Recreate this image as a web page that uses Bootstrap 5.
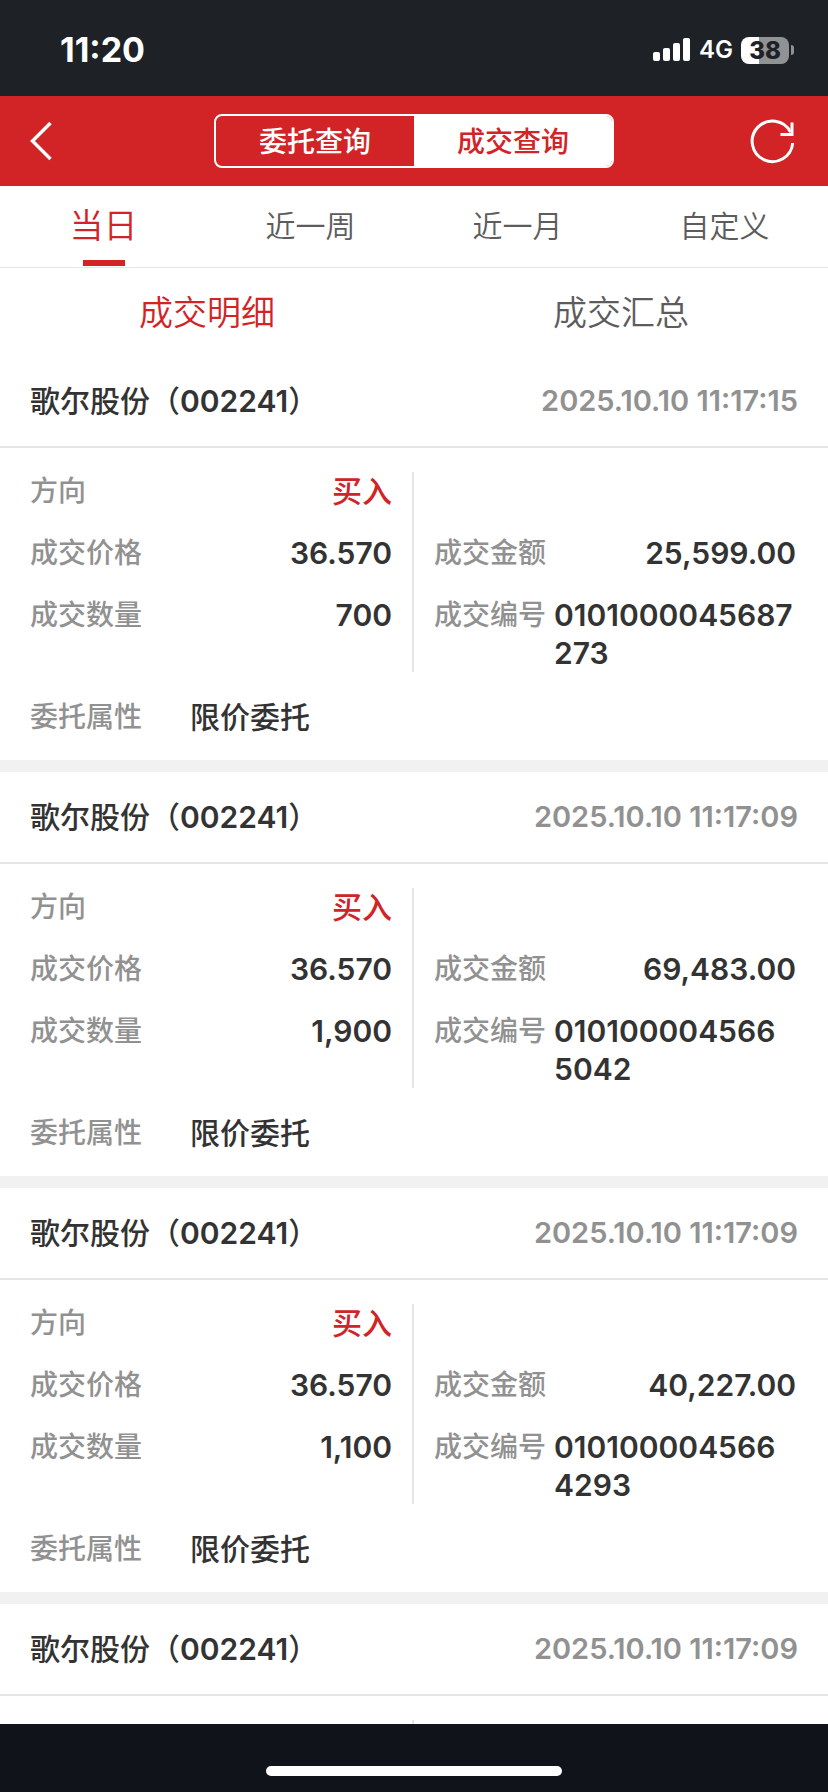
<!DOCTYPE html>
<html lang="zh-CN">
<head>
<meta charset="utf-8">
<meta name="viewport" content="width=device-width, initial-scale=1">
<title>成交查询</title>
<link href="https://cdn.jsdelivr.net/npm/bootstrap@5.3.0/dist/css/bootstrap.min.css" rel="stylesheet">
<style>
  :root { --brand: #d22426; --ink: #333; --muted-ink: #919191; --rule: #e6e6e6; }
  body { font-family: Inter, "Noto Sans CJK SC", sans-serif; font-size: 28px; line-height: 38px; color: var(--ink); background: #fff; }
  .status-bar { height: 96px; padding: 0 34px 0 60px; background: #1e2125; color: #fff; }
  .status-bar time { font-size: 34px; font-weight: 700; }
  .network { font-size: 24px; font-weight: 600; }
  .battery { width: 48px; height: 27px; border-radius: 8px; background: linear-gradient(90deg, #fff 38%, #919294 38%); color: #1e2125; font-size: 24px; line-height: 27px; font-weight: 800; }
  .battery-tip { width: 3px; height: 10px; margin-left: 2px; border-radius: 0 4px 4px 0; background: #919294; }
  .title-bar { height: 90px; padding: 0 30px; background: var(--brand); }
  .title-bar svg { display: block; }
  .segments { width: 400px; height: 54px; border: 2px solid #fff; border-radius: 8px; overflow: hidden; }
  .segments .btn { flex: 1 1 0; padding: 2px 0 0; border: 0; border-radius: 0; font-size: 28px; line-height: 48px; font-weight: 500; color: #fff; }
  .segments .btn.active { background: #fff; color: var(--brand); }
  .period-tabs { border-bottom: 1px solid var(--rule); }
  .tab-btn { flex: 1 1 0; border: 0; padding: 0; background: none; font-weight: 350; color: #5c5c5c; }
  .tab-btn.active { color: var(--brand); }
  .period-tabs .tab-btn { height: 81px; padding-bottom: 2px; font-size: 30px; position: relative; }
  .period-tabs .tab-btn.active { font-size: 34px; }
  .period-tabs .tab-btn.active::after { content: ""; position: absolute; left: 50%; bottom: 1px; width: 42px; height: 6px; margin-left: -21px; background: var(--brand); }
  .view-tabs .tab-btn { height: 88px; padding-top: 2px; font-size: 34px; }
  .records { scrollbar-width: none; min-height: 0; }
  .records::-webkit-scrollbar { display: none; }
  .record + .record { border-top: 12px solid #f1f1f1; }
  .record-head { height: 92px; padding: 0 30px; border-bottom: 2px solid var(--rule); }
  .stock { font-size: 30px; line-height: 38px; font-weight: 500; }
  .stock-code { font-weight: 600; }
  .stamp { color: var(--muted-ink); font-size: 29px; font-weight: 600; }
  .record-body { padding: 24px 0; }
  .pane { min-height: 200px; gap: 24px; }
  .pane-start { padding: 0 20px 0 30px; border-right: 2px solid var(--rule); }
  .pane-end { padding: 62px 32px 0 20px; }
  .caption-text { flex: none; color: var(--muted-ink); font-weight: 500; }
  .figure-text { font-size: 30px; font-weight: 600; }
  .cjk-text { font-weight: 500; }
  .side-text { color: var(--brand); }
  .attribute { padding: 0 30px; margin-top: 26px; gap: 48px; }
  .home-bar { height: 68px; background: #10131a; padding-top: 42px; }
  .home-bar span { width: 296px; height: 10px; border-radius: 5px; background: #fff; }
</style>
</head>
<body>
<div class="vh-100 d-flex flex-column">
  <div class="status-bar d-flex align-items-center justify-content-between flex-shrink-0">
    <time class="pt-1">11:20</time>
    <div class="d-flex align-items-center pt-1">
      <svg class="me-2" width="38" height="24" viewBox="0 0 38 24" fill="#fff" aria-hidden="true">
        <rect x="0" y="14" width="7" height="9" rx="2"/><rect x="10" y="10" width="7" height="13" rx="2"/><rect x="20" y="5" width="7" height="18" rx="2"/><rect x="30" y="0" width="7" height="23" rx="2"/>
      </svg>
      <span class="network me-2">4G</span>
      <span class="battery text-center">38</span>
      <span class="battery-tip"></span>
    </div>
  </div>

  <header class="title-bar d-flex align-items-center justify-content-between flex-shrink-0">
    <button class="btn p-0 border-0" type="button" aria-label="返回">
      <svg width="48" height="42" viewBox="0 0 48 42" fill="none" stroke="#fff" stroke-width="3.4"><path d="M20.5 3 2.5 21l18 18"/></svg>
    </button>
    <div class="segments d-flex" role="group" aria-label="查询类型">
      <button class="btn" type="button">委托查询</button>
      <button class="btn active" type="button">成交查询</button>
    </div>
    <button class="btn p-0 border-0" type="button" aria-label="刷新">
      <svg width="48" height="46" viewBox="0 0 48 46" fill="none" stroke="#fff" stroke-width="3"><path d="M42.700 25A20.300 20.300 0 1 1 40.500 14"/><path d="M42 4.500V16.600H30.500"/></svg>
    </button>
  </header>

  <nav class="period-tabs d-flex flex-shrink-0" aria-label="时间范围">
    <button class="tab-btn active" type="button">当日</button>
    <button class="tab-btn" type="button">近一周</button>
    <button class="tab-btn" type="button">近一月</button>
    <button class="tab-btn" type="button">自定义</button>
  </nav>
  <nav class="view-tabs d-flex flex-shrink-0" aria-label="视图">
    <button class="tab-btn active" type="button">成交明细</button>
    <button class="tab-btn" type="button">成交汇总</button>
  </nav>

  <main class="records flex-grow-1 overflow-auto">
    <article class="record">
      <div class="record-head d-flex align-items-center justify-content-between">
        <span class="stock">歌尔股份（<span class="stock-code">002241</span>）</span><time class="stamp">2025.10.10 11:17:15</time>
      </div>
      <div class="record-body">
        <div class="d-flex">
          <div class="pane pane-start w-50 d-flex flex-column">
            <div class="d-flex justify-content-between"><span class="caption-text">方向</span><span class="figure-text cjk-text side-text">买入</span></div>
            <div class="d-flex justify-content-between"><span class="caption-text">成交价格</span><span class="figure-text">36.570</span></div>
            <div class="d-flex justify-content-between"><span class="caption-text">成交数量</span><span class="figure-text">700</span></div>
          </div>
          <div class="pane pane-end w-50 d-flex flex-column">
            <div class="d-flex justify-content-between"><span class="caption-text">成交金额</span><span class="figure-text">25,599.00</span></div>
            <div class="d-flex gap-2"><span class="caption-text">成交编号</span><span class="figure-text">0101000045687<wbr>273</span></div>
          </div>
        </div>
        <div class="attribute d-flex align-items-center"><span class="caption-text">委托属性</span><span class="figure-text cjk-text">限价委托</span></div>
      </div>
    </article>

    <article class="record">
      <div class="record-head d-flex align-items-center justify-content-between">
        <span class="stock">歌尔股份（<span class="stock-code">002241</span>）</span><time class="stamp">2025.10.10 11:17:09</time>
      </div>
      <div class="record-body">
        <div class="d-flex">
          <div class="pane pane-start w-50 d-flex flex-column">
            <div class="d-flex justify-content-between"><span class="caption-text">方向</span><span class="figure-text cjk-text side-text">买入</span></div>
            <div class="d-flex justify-content-between"><span class="caption-text">成交价格</span><span class="figure-text">36.570</span></div>
            <div class="d-flex justify-content-between"><span class="caption-text">成交数量</span><span class="figure-text">1,900</span></div>
          </div>
          <div class="pane pane-end w-50 d-flex flex-column">
            <div class="d-flex justify-content-between"><span class="caption-text">成交金额</span><span class="figure-text">69,483.00</span></div>
            <div class="d-flex gap-2"><span class="caption-text">成交编号</span><span class="figure-text">010100004566<wbr>5042</span></div>
          </div>
        </div>
        <div class="attribute d-flex align-items-center"><span class="caption-text">委托属性</span><span class="figure-text cjk-text">限价委托</span></div>
      </div>
    </article>

    <article class="record">
      <div class="record-head d-flex align-items-center justify-content-between">
        <span class="stock">歌尔股份（<span class="stock-code">002241</span>）</span><time class="stamp">2025.10.10 11:17:09</time>
      </div>
      <div class="record-body">
        <div class="d-flex">
          <div class="pane pane-start w-50 d-flex flex-column">
            <div class="d-flex justify-content-between"><span class="caption-text">方向</span><span class="figure-text cjk-text side-text">买入</span></div>
            <div class="d-flex justify-content-between"><span class="caption-text">成交价格</span><span class="figure-text">36.570</span></div>
            <div class="d-flex justify-content-between"><span class="caption-text">成交数量</span><span class="figure-text">1,100</span></div>
          </div>
          <div class="pane pane-end w-50 d-flex flex-column">
            <div class="d-flex justify-content-between"><span class="caption-text">成交金额</span><span class="figure-text">40,227.00</span></div>
            <div class="d-flex gap-2"><span class="caption-text">成交编号</span><span class="figure-text">010100004566<wbr>4293</span></div>
          </div>
        </div>
        <div class="attribute d-flex align-items-center"><span class="caption-text">委托属性</span><span class="figure-text cjk-text">限价委托</span></div>
      </div>
    </article>

    <article class="record">
      <div class="record-head d-flex align-items-center justify-content-between">
        <span class="stock">歌尔股份（<span class="stock-code">002241</span>）</span><time class="stamp">2025.10.10 11:17:09</time>
      </div>
      <div class="record-body">
        <div class="d-flex"><div class="pane pane-start w-50"></div><div class="pane pane-end w-50"></div></div>
      </div>
    </article>
  </main>

  <div class="home-bar d-flex justify-content-center flex-shrink-0"><span></span></div>
</div>
<script src="https://cdn.jsdelivr.net/npm/bootstrap@5.3.0/dist/js/bootstrap.bundle.min.js"></script>
</body>
</html>
